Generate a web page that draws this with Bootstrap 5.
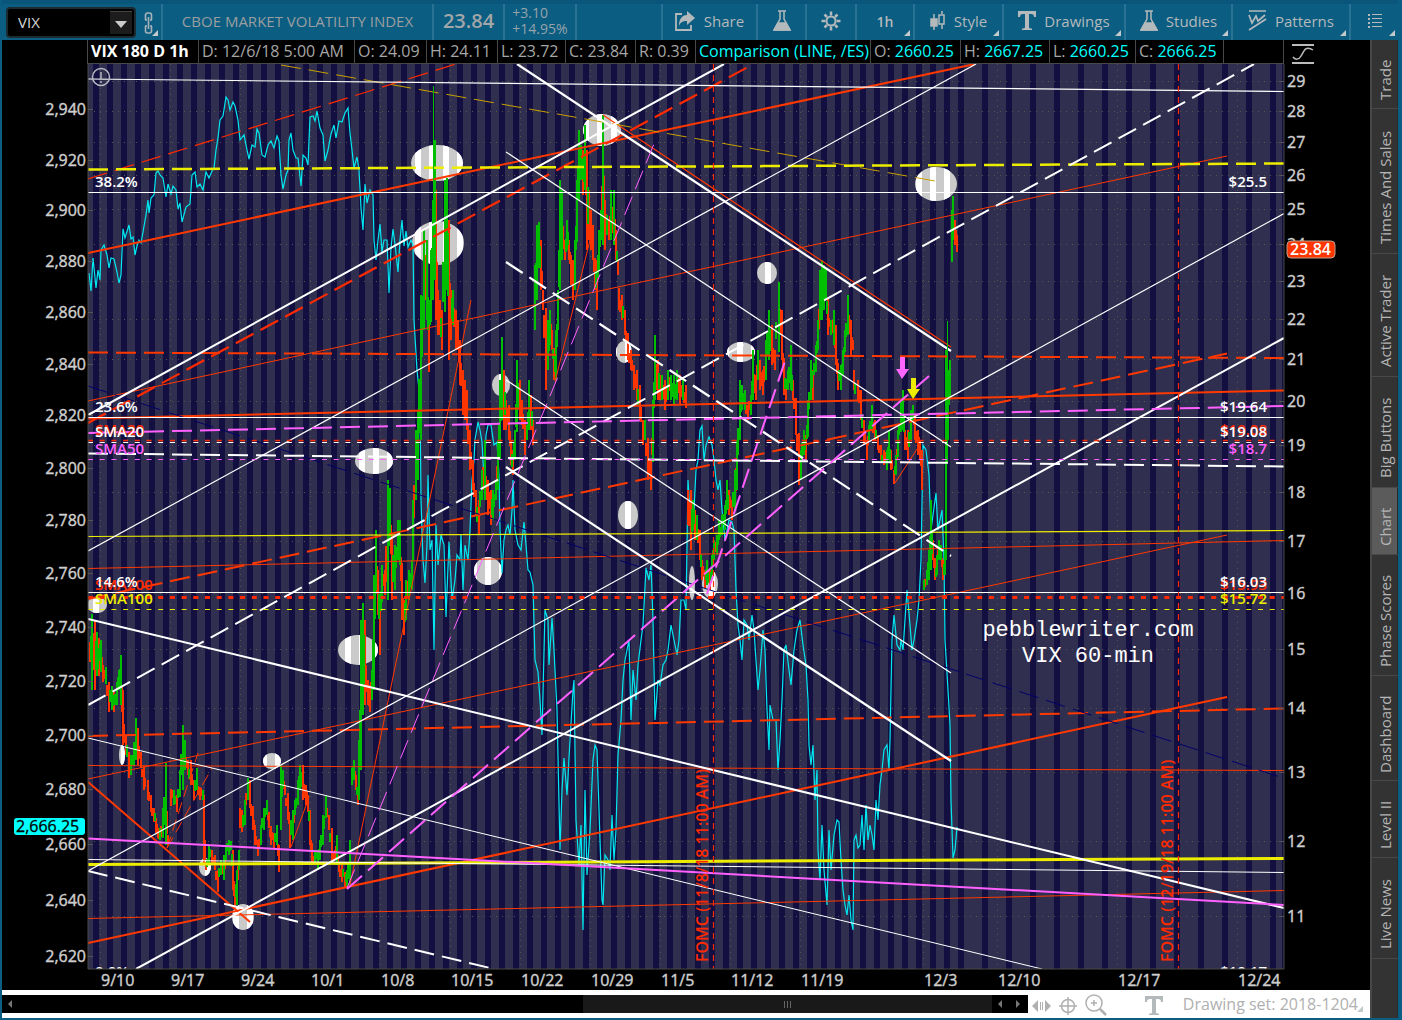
<!DOCTYPE html>
<html lang="en">
<head>
<meta charset="utf-8">
<meta name="viewport" content="width=device-width, initial-scale=1">
<title>VIX chart</title>
<link href="https://cdn.jsdelivr.net/npm/bootstrap@5.3.0/dist/css/bootstrap.min.css" rel="stylesheet">
<style>
:root{--teal:#0b5d82;--edge:#2a7294;--ink:#b4b9bb}
body{background:var(--teal);font-family:"Open Sans","Noto Sans",sans-serif;font-size:15px;color:var(--ink);overflow:hidden}
button{font:inherit;color:inherit;background:none;border:0;padding:0}
.app{padding:0 4px 2px 2px}
.topbar{height:40px;border-top:4px solid #0a567a;flex:none}
.cell{border-left:2px solid var(--edge);position:relative;display:flex;align-items:center;justify-content:center;gap:8px;height:36px;padding-bottom:2px;white-space:nowrap;flex:none}
.corner::after{content:"";position:absolute;right:3px;bottom:4px;border-left:6px solid transparent;border-bottom:6px solid #c4c9cb}
.symbox{width:130px;height:31px;margin-left:4px;background:#000;border:2px solid #1c2a31;border-radius:4px;padding:2px}
.symbox input{background:#000;border:0;color:#d8d8d8;width:100px;padding:0 0 0 8px;outline:0;font-size:15px}
.symbox button{width:24px;background:#1c1c1c;border-top:1px solid #444}
.w-link{width:25px;position:relative}
.w-name{width:271px;color:#9b9ea0}
.w-last{width:71px;color:#a3a6a8;font-size:20px;font-weight:600}
.w-chg{width:72px;color:#96a3a9;font-size:14px;line-height:16px}
.w-share{width:95px}.w-s{width:49px}.w-b{width:50px}.w-1h{width:58px;font-weight:600;font-size:14px}.w-style{width:89px}.w-draw{width:122px}.w-stud{width:107px}.w-pat{width:118px}.w-menu{width:49px}
.infobar{height:24px;padding-left:85px;background:#000;color:#a6a6a6;white-space:nowrap;font-size:16px}
.infobar span{border-left:1px solid #484848;padding-left:3px;line-height:23px;border-bottom:1px solid #484848;height:24px;flex:none}
.infobar b{font-weight:400;color:#0ff}
.board{background:#000;min-width:0}
.chartbox{min-height:0}
.chartbox svg{display:block;width:100%;height:100%}
.w1{width:111px}
.tabs-col{width:28px;background:#484848;padding-left:2px;gap:1px;flex:none}
.tabs-col button{background:#333;color:#b5b5b5;writing-mode:vertical-rl;transform:rotate(180deg);line-height:26px;font-size:15px;padding-bottom:12px;border-left:1px solid #2a2a2a}
.tabs-col button.active{background:#5b5b5b}
.footer-row{height:28px;background:#fff;color:#b0b0b0;flex:none}
.track{width:1026px;height:18px;background:#000;flex:0 1 auto}
.thumb{flex:0 1 409px;background:#191919}
.tri{width:22px;color:#666;display:flex;align-items:center;justify-content:center;flex:none}
.axis text{font-size:16px;fill:#cfcfcf;stroke:#cfcfcf;stroke-width:.4px}
.lab{font-size:15px;font-weight:600}
.memo{font:22px "Liberation Mono",monospace;fill:#fff}
</style>
<script src="https://cdn.jsdelivr.net/npm/bootstrap@5.3.0/dist/js/bootstrap.bundle.min.js"></script>
</head>
<body>
<div class="app d-flex flex-column vh-100">
  <header class="topbar d-flex align-items-center">
    <div class="symbox d-flex"><input aria-label="Symbol" value="VIX"><button aria-label="Symbol list"><svg width="12" height="7"><path d="M0 0h12l-6 7z" fill="#ccc"/></svg></button></div>
    <button class="w-link corner h-100" aria-label="Link"><svg width="9" height="22" fill="none" stroke="#a7b3b8" stroke-width="1.600"><path d="M1.500 8V3a2 2 0 0 1 2-2h2a2 2 0 0 1 2 2v5M1.500 14v5a2 2 0 0 0 2 2h2a2 2 0 0 0 2-2v-5M4.500 5v12M1 8h2M6 8h2M1 14h2M6 14h2"/></svg></button>
    <div class="cell w-name">CBOE MARKET VOLATILITY INDEX</div>
    <div class="cell w-last">23.84</div>
    <div class="cell w-chg"><div>+3.10<br>+14.95%</div></div>
    <div class="cell flex-grow-1"></div>
    <button class="cell w-share"><svg width="21" height="22" fill="none" stroke="#b4b9bb" stroke-width="1.800"><path d="M7 4H1v16h15v-5"/><path d="M12 1l8 7-8 7v-4C7 11 5 13 4 16 4 9 7 5 12 5z" fill="#b4b9bb" stroke="none"/></svg>Share</button>
    <button class="cell w-s" aria-label="Analyze"><svg width="18" height="22"><use href="#flask"/></svg></button>
    <button class="cell w-b" aria-label="Settings"><svg width="20" height="20" viewBox="-10 -10 20 20" fill="none" stroke="#b4b9bb"><circle r="4.500" stroke-width="2"/><path stroke-width="2.500" d="M0-5.500V-9.500M0 5.500V9.500M-5.500 0H-9.500M5.500 0H9.500M-4-4l-2.500-2.500M4 4l2.500 2.500M4-4l2.500-2.500M-4 4l-2.500 2.500"/></svg></button>
    <button class="cell corner w-1h">1h</button>
    <button class="cell corner w-style"><svg width="16" height="20" stroke="#b4b9bb" stroke-width="1.500"><path d="M4 3v16M12 0v3M12 13v5"/><path d="M1 8h6v7H1z" fill="#b4b9bb"/><path d="M9 4h5v9H9z" fill="none"/></svg>Style</button>
    <button class="cell corner w-draw"><svg width="18" height="20"><use href="#tee"/></svg>Drawings</button>
    <button class="cell corner w-stud"><svg width="18" height="22"><use href="#flask"/></svg>Studies</button>
    <button class="cell corner w-pat"><svg width="19" height="22" fill="none" stroke="#b4b9bb" stroke-width="1.700"><path d="M1 1h17M1 5l3 8 4-7 2 5 7-6M1 20L18 9"/></svg>Patterns</button>
    <button class="cell corner w-menu" aria-label="Menu"><svg width="14" height="14" fill="#b4b9bb"><path d="M0 0h2v2H0zM4 0h10v1H4zM0 4h2v2H0zM4 4h10v1H4zM0 8h2v2H0zM4 8h10v1H4zM0 12h2v2H0zM4 12h10v1H4z"/></svg></button>
  </header>

  <div class="d-flex flex-grow-1" style="min-height:0">
    <main class="board d-flex flex-column flex-grow-1">
      <div class="infobar d-flex">
        <span class="text-white fw-bold w1">VIX 180 D 1h</span><span style="width:156px">D: 12/6/18 5:00 AM</span><span style="width:72px">O: 24.09</span><span style="width:71px">H: 24.11</span><span style="width:68px">L: 23.72</span><span style="width:70px">C: 23.84</span><span style="width:60px">R: 0.39</span><span style="width:175px"><b>Comparison (LINE, /ES)</b></span><span style="width:90px">O: <b>2660.25</b></span><span style="width:89px">H: <b>2667.25</b></span><span style="width:86px">L: <b>2660.25</b></span><span style="width:88px">C: <b>2666.25</b></span><span class="flex-shrink-1" style="width:61px;border-right:1px solid #484848"></span>
        <svg class="ms-2 mt-1" width="22" height="20" fill="none" stroke="#bbb"><path stroke-width="2" d="M0 1h22M0 19h22"/><path stroke-width="1.500" d="M1 13c2 3 6 3 8-1l3-5c2-4 6-3 9-1"/></svg>
      </div>
      <div class="chartbox flex-grow-1">
        <svg id="chart" viewBox="2 64 1368 926" role="img" aria-label="VIX hourly chart with /ES comparison">
          <defs>
            <g id="flask" fill="none" stroke="#b4b9bb" stroke-width="1.500"><path d="M5 1h8M7 1v8L1 20h16L11 9V1"/><path d="M5 13h8l4 7H1z" fill="#b4b9bb"/></g>
            <path id="tee" d="M0 0h18v6h-2c0-2-1-3-3-3h-2v13c0 1 1 1.500 3 1.500V19H4v-1.500c2 0 3-.500 3-1.500V3H5C3 3 2 4 2 6H0z" fill="#b4b9bb"/>
            <clipPath id="plot"><rect x="88" y="64" width="1196" height="905"/></clipPath>
            <clipPath id="spots"></clipPath>
          </defs>
          <rect x="2" y="64" width="1368" height="926" fill="#000"/>
          <g clip-path="url(#plot)">
            <rect x="88" y="64" width="1196" height="905" fill="#312f4f"/>
            <path id="days" fill="#130f40"/>
            <g id="grid" stroke="#54544a" stroke-dasharray="1 5"></g>
            <g clip-path="url(#spots)"><rect x="88" y="64" width="1196" height="905" fill="#cacaca"/><path id="days2" fill="#fff"/></g>
            <polyline id="es" fill="none" stroke="#00e8f0" stroke-width="1.200"/>
            <path id="down" stroke="#ff3500" stroke-width="2"/>
            <path id="up" stroke="#00be00" stroke-width="2"/>
            <g id="studies"></g>
            <path d="M900 357h5v12h4l-7 10-6-10h4z" fill="#ff66ff"/>
            <path d="M911 378h5v11h4l-7 10-6-10h4z" fill="#eded00"/>
            <g class="lab" id="labels"></g>
            <g class="memo" text-anchor="middle"><text x="1088" y="636">pebblewriter.com</text><text x="1088" y="662">VIX 60-min</text></g>
            <g fill="#ff2a00" font-size="16" font-weight="600"><text transform="translate(708 962) rotate(-90)">FOMC (11/8/18 11:00 AM)</text><text transform="translate(1173 962) rotate(-90)">FOMC (12/19/18 11:00 AM)</text></g>
            <circle cx="101" cy="77" r="8.500" fill="none" stroke="#b8b8c0" stroke-width="1.500"/><path d="M101 72v7M101 81v2" stroke="#b8b8c0" stroke-width="1.500"/>
          </g>
          <path d="M88 64V969H1284V64" fill="none" stroke="#484840"/>
          <g class="axis" id="axes"></g>
          <rect x="14" y="818" width="71" height="17" rx="3" fill="#0ff"/><text x="16" y="832" font-size="16" fill="#000" stroke="#000" stroke-width=".300">2,666.25</text>
          <rect x="1287" y="241" width="48" height="17" rx="4" fill="#ff3500" stroke="#b8a090"/><text x="1290" y="255" font-size="16" font-weight="600" fill="#fff">23.84</text>
        </svg>
      </div>
      <div class="footer-row d-flex align-items-center">
        <div class="track d-flex">
          <button class="tri me-auto" style="width:16px" aria-label="Scroll to start"><svg width="4" height="8"><path d="M4 0v8L0 4z" fill="#777"/></svg></button>
          <div class="thumb d-flex align-items-center justify-content-center"><svg width="7" height="7" stroke="#666"><path d="M.500 0v7M3.500 0v7M6.500 0v7"/></svg></div>
          <button class="tri" style="width:16px" aria-label="Scroll left"><svg width="4" height="8"><path d="M4 0v8L0 4z" fill="#777"/></svg></button>
          <button class="tri" style="width:20px" aria-label="Scroll right"><svg width="4" height="8"><path d="M0 0v8l4-4z" fill="#777"/></svg></button>
        </div>
        <button class="ms-1" aria-label="Expand"><svg width="19" height="14" fill="#b0b0b0"><path d="M6 1v12L0 7zM13 1v12l6-6zM8 3h1v8H8zM10 3h1v8h-1z"/></svg></button>
        <button class="ms-2" aria-label="Crosshair"><svg width="18" height="18" fill="none" stroke="#b0b0b0" stroke-width="1.500"><circle cx="9" cy="9" r="6.500"/><path d="M9 0v18M0 9h18"/></svg></button>
        <button class="ms-2" aria-label="Zoom in"><svg width="22" height="22" fill="none" stroke="#b0b0b0" stroke-width="1.500"><circle cx="9" cy="9" r="8"/><path d="M9 6v6M6 9h6"/><path d="M15 15l6 6" stroke-width="2.500"/></svg></button>
        <button class="ms-auto me-3 pe-1" aria-label="Text"><svg width="18" height="19"><use href="#tee"/></svg></button>
        <span class="corner position-relative text-nowrap pe-2 me-1" style="font-size:16px">Drawing set: 2018-1204</span>
      </div>
    </main>
    <nav class="tabs-col d-flex flex-column" aria-label="Gadgets">
      <button style="height:68px">Trade</button><button style="height:144px">Times And Sales</button><button style="height:122px">Active Trader</button><button style="height:110px">Big Buttons</button><button class="active" style="height:66px">Chart</button><button style="height:120px">Phase Scores</button><button style="height:104px">Dashboard</button><button style="height:76px">Level II</button><button style="height:100px">Live News</button><button class="flex-grow-1" aria-label="More"></button>
    </nav>
  </div>
</div>
<script>
const $ = id => document.getElementById(id), NS = 'http://www.w3.org/2000/svg';
function add(parent, tag, attrs, text) {
  const e = document.createElementNS(NS, tag);
  for (const k in attrs) e.setAttribute(k, attrs[k]);
  if (text) e.textContent = text;
  $(parent).appendChild(e);
}
// overnight session bands
let bands = '';
for (let x = 93; x < 850; x += 14) bands += `M${x} 64h${x > 845 ? 4 : 6}v905h-${x > 845 ? 4 : 6}z`;
for (let x = 860; x < 950; x += 14) bands += `M${x} 64h6v905h-6z`;
for (let x = 958; x < 1284; x += 24) bands += `M${x} 64h6v905h-6z`;
bands += 'M1282 64h2v905h-2z';
$('days').setAttribute('d', bands); $('days2').setAttribute('d', bands);

const vix = [[29,81],[28,111],[27,142],[26,175],[25,209],[24,244],[23,281],[22,319],[21,359],[20,401],[19,445],[18,492],[17,541],[16,593],[15,649],[14,708],[13,772],[12,841],[11,916]];
for (const [v, y] of vix) {
  add('grid','line',{x1:88,x2:1284,y1:y+.5,y2:y+.5});
  add('axes','line',{x1:1279,x2:1284,y1:y+.5,y2:y+.5,stroke:'#555'});
  add('axes','text',{x:1287,y:y+6}, ''+v);
}
[109,160,210,261,312,364,415,468,520,573,627,681,735,789,844,900,956].forEach((y, i) => {
  add('axes','line',{x1:88,x2:93,y1:y+.5,y2:y+.5,stroke:'#555'});
  add('axes','text',{x:86,y:y+6,'text-anchor':'end'}, '2,' + (940 - 20*i));
});
[['9/10',100],['9/17',170],['9/24',240],['10/1',310],['10/8',380],['10/15',450],['10/22',520],['10/29',590],['11/5',660],['11/12',730],['11/19',800],['12/3',923],['12/10',997],['12/17',1117],['12/24',1237]].forEach(([d, x]) => {
  add('grid','line',{x1:x+.5,x2:x+.5,y1:64,y2:969});
  add('axes','text',{x:x+1,y:986}, d);
});

// marked areas
[[437,163,26,18],[438,243,26,22],[602,130,19,16],[936,184,21,17],[767,273,10,11],[741,352,14,10],[624,352,8,11],[501,385,9,11],[374,461,19,13],[488,571,14,14],[628,515,10,14],[358,650,20,15],[97,605,10,8],[122,755,3,10],[272,761,9,8],[205,867,6,9],[243,917,11,13],[692,583,3,17],[710,584,8,14]]
.forEach(([cx,cy,rx,ry]) => add('spots','ellipse',{cx,cy,rx,ry}));

// /ES comparison line
$('es').setAttribute('points', `89,273 91,291 93,258 96,288 98,270 100,280 101,250 104,245 107,255 109,268 111,258 114,259 117,272 119,283 121,275 123,229 125,238 129,225 131,239 133,237 135,255 137,246 139,240 141,243 143,232 146,215 148,200 149,213 151,198 154,195 156,173 158,171 160,175 163,178 166,197 168,184 171,194 173,186 176,190 178,209 180,203 182,222 186,207 190,204 192,175 195,172 197,187 200,184 203,190 206,172 209,178 212,171 214,168 216,150 218,138 220,120 223,116 226,97 228,100 230,110 233,102 235,106 238,120 240,140 244,135 247,150 249,159 252,145 255,147 257,129 259,133 262,155 265,157 268,145 271,141 274,148 277,136 279,141 281,175 283,189 286,175 288,170 289,140 291,133 293,150 296,158 298,158 301,186 303,155 306,158 308,165 310,117 313,116 315,121 317,111 320,128 323,135 325,161 328,150 331,134 334,125 336,138 339,121 342,122 345,113 348,108 350,133 352,150 354,168 357,157 359,170 361,208 363,230 365,184 367,203 370,190 373,195 374,240 376,260 378,240 380,224 382,252 384,240 387,240 389,293 391,248 393,229 395,244 398,272 400,240 402,220 404,246 406,231 408,247 411,240 413,245 414,320 417,370 420,400 421,500 423,560 425,583 427,545 428,475 430,550 432,540 434,650 436,525 438,565 441,535 444,545 446,617 449,542 452,600 455,580 457,555 460,560 461,535 463,590 465,545 468,560 470,530 472,480 474,460 475,440 478,422 480,430 482,442 484,480 486,435 488,425 491,425 494,445 497,442 499,475 500,530 502,573 504,540 506,530 508,525 510,535 512,510 513,480 515,530 518,545 521,550 524,522 526,545 528,570 530,572 533,585 535,660 538,672 540,700 542,735 545,610 548,620 549,665 552,618 554,650 557,710 560,850 562,790 564,758 567,795 570,740 573,690 574,680 576,820 579,865 581,825 583,930 585,790 587,875 590,830 593,760 595,745 597,750 599,810 602,900 603,905 605,855 608,860 610,870 612,815 614,860 616,830 618,755 621,720 623,680 625,660 627,650 629,640 631,720 633,670 636,700 638,665 641,640 643,625 646,568 649,580 651,565 653,620 655,720 658,680 660,685 663,665 666,660 668,650 671,625 674,640 677,655 679,640 681,600 684,600 686,610 688,480 691,530 693,530 696,470 698,460 700,430 702,426 704,460 706,445 709,437 712,445 714,460 716,480 718,490 720,480 722,510 725,540 727,530 729,520 732,522 734,530 736,590 738,625 740,640 742,660 744,620 747,625 749,640 752,615 754,630 756,660 758,690 760,670 763,630 765,650 767,710 769,750 770,705 773,720 776,720 778,770 780,740 782,700 784,650 786,645 789,670 791,685 794,650 797,630 800,620 803,645 806,665 808,700 809,745 811,765 813,745 815,800 817,770 818,850 820,880 822,825 824,870 827,905 829,830 831,870 834,835 837,820 839,822 841,860 843,890 845,905 847,915 849,895 851,920 853,930 854,840 856,835 858,848 860,845 862,815 864,850 866,805 868,840 870,825 872,835 874,850 876,800 878,820 880,785 882,770 884,750 887,745 889,770 890,740 892,640 894,615 897,645 900,650 901,640 903,650 905,620 907,590 910,625 912,650 914,640 917,620 919,600 921,560 923,445 926,450 929,475 931,530 933,515 936,493 938,530 940,520 942,510 944,560 945,640 948,690 950,725 951,800 953,858 955,850 957,827`);

// hourly bars: x, high, low
const bars = `90 642 662;92 614 690;95 620 690;97 632 676;99 638 676;101 640 672;103 665 682;106 667 684;109 687 712;112 686 710;114 692 712;117 682 705;119 670 690;121 655 705;123 690 745;126 735 755;129 752 778;131 755 775;134 742 765;136 718 760;138 728 765;141 752 768;144 775 790;148 780 800;151 795 812;154 808 822;156 818 833;158 828 838;160 828 840;163 808 838;166 763 845;168 835 845|171 789 806;174 790 805;177 795 812;180 770 790;183 725 790;185 740 770;188 760 775;191 760 785;194 780 800;197 768 790;200 787 800;203 790 800;204 795 865;206 862 870;209 845 860;212 850 865;215 855 870;218 870 892;221 860 875;224 855 880;226 845 860;229 840 855;231 841 850;233 850 890;235 890 908;237 870 905;239 850 870|240 808 828;242 810 832;245 800 825;248 778 800;250 780 808;253 810 830;255 825 845;258 840 856;261 825 845;264 808 830;267 800 815;269 812 828;271 830 845;274 833 848;277 825 845;279 845 872|281 765 830;283 770 788;285 785 795;288 800 820;290 820 848;293 810 840;295 800 815;298 780 805;300 765 790;303 765 800;306 785 805;308 795 812;310 820 845;312 850 865;315 850 865;318 850 870;320 840 860;323 815 845;326 795 818;329 815 830;332 840 862;335 850 860;337 835 865;339 865 872;342 865 882;345 872 888;347 870 886;350 840 885|352 768 785;354 760 780;356 775 790;358 790 805;359 740 800;361 620 770;363 603 715;365 620 705;368 680 705;370 685 712;372 670 700;374 575 690;376 530 590;378 570 615;380 600 655;382 565 590;385 570 595;388 480 600;390 488 540;392 535 600;395 545 590;398 520 560;400 520 565;402 570 620;404 600 635;406 580 620;409 570 600;412 560 590;413 500 560;416 430 500;418 410 480;421 295 440;424 230 330;427 240 320;429 320 372;431 250 300;433 200 300;435 140 280;436 190 320;438 290 335;440 300 335;442 310 350;445 180 300;447 178 290;449 220 360;451 290 340;453 290 325;456 310 350;458 320 350;460 340 385;463 370 415;465 380 420;467 390 430;470 430 470;473 460 490;476 490 515;479 500 535;482 470 500;485 440 500;488 480 515;491 490 525;493 490 520;496 480 500;498 440 490;500 380 460;502 337 420;504 370 430;506 400 430;509 405 440;511 440 465;513 450 475;515 430 460;517 360 420;520 380 420;522 400 425;525 420 455;527 425 440;529 380 430;531 395 430;533 420 445|535 265 330;537 225 300;539 222 260;541 240 290;543 290 310;546 320 390;548 320 370;550 310 345;552 330 350;554 360 380;556 330 380;558 290 330;560 180 290;562 190 260;565 240 260;567 220 250;569 240 260;571 255 285;573 260 300;575 240 290;577 180 225;579 130 200;581 145 180;583 150 195;585 125 190;587 150 250;589 190 240;591 210 250;593 225 260;595 270 290;597 260 310;599 230 270;601 210 240;603 115 245;605 200 250;607 215 235;609 220 240;611 190 240;614 190 245;616 230 260;618 260 275|619 288 310;622 295 320;625 310 335;628 340 360;631 350 370;634 365 390;637 370 400;640 385 420;643 420 445;645 420 440;648 450 480;651 460 490;653 400 440;655 335 400;658 360 400;660 375 400;662 375 400;665 380 410;668 370 400;671 375 400;674 375 405;677 370 400;680 375 405;683 380 400;686 385 408|688 490 525;691 490 550;693 500 530;695 510 540;697 515 540;700 530 560;702 560 580;705 570 588;707 560 585;710 570 590;712 555 575;714 540 560;717 535 555;719 520 540;722 515 535;725 505 530;727 480 510;729 490 515;732 500 520;735 470 510;737 440 490;740 380 440;742 385 410;745 390 410;748 405 420;751 395 415;753 350 400;756 375 400;758 350 380;760 360 390;763 370 395;766 340 380;769 310 360;772 325 365;775 350 370;779 282 330;782 310 360;784 370 395;786 380 400;788 370 390;791 345 390;793 380 400;796 410 435;799 440 485;801 450 480;804 430 455;806 435 460;808 400 430;811 360 400;813 370 400;816 345 365;818 320 350;820 270 320;822 260 320;824 265 310;826 268 300;828 315 335;831 320 335;834 310 345;836 325 365;838 370 390;841 365 390;843 350 375;845 330 345;848 295 335;851 320 355;853 340 350|854 370 390;858 380 400;861 390 420;864 420 445;867 440 460;869 425 440;872 405 430;875 420 440;878 435 450;881 445 460;884 450 465;887 450 470;889 430 460;891 450 470;894 470 484;896 455 475;898 430 450;901 400 425;903 390 430;905 430 450;908 430 460;911 410 440;913 405 420;915 415 440;918 430 455;920 440 460;922 450 490|924 580 590;927 570 585;929 550 580;931 500 570;933 540 560;935 565 580;937 555 575;939 540 560;941 545 560;943 560 580;945 550 575;946 350 560;948 370 440;950 360 400|952 210 262;953 196 240;955 220 245;957 235 252`;
let up = '', down = '';
for (const run of bars.split('|')) {
  const b = run.split(';').map(s => s.split(' ').map(Number));
  b.forEach(([x, hi, lo], i) => {
    const p = b[i-1] || b[i+1], mid = (hi + lo) / 2, pm = (p[1] + p[2]) / 2;
    const rising = i ? mid < pm + 3 : mid > pm;
    // stretch each bar so that it reaches the one before it
    let t = hi, l = lo;
    if (i) { if (t > p[2]) t = p[2] - 2; if (l < p[1]) l = p[1] + 2; }
    const seg = `M${x} ${t}V${l}`;
    if (rising) up += seg; else down += seg;
    const n = b[i+1];
    if (n && n[0] - x > 1) {
      // half-step bar, about half as tall as its neighbours
      const c = (hi + lo + n[1] + n[2]) / 4 + (x * 37 % 9) - 4, r = Math.max(4, (lo - hi + n[2] - n[1]) / 8);
      const next = (n[1] + n[2]) / 2 < mid;
      const s2 = `M${x + 1} ${Math.round(c - r)}V${Math.round(c + r)}`;
      if (x * 13 % 7 < 2 ? !next : next) up += s2; else down += s2;
    }
  });
}
$('up').setAttribute('d', up); $('down').setAttribute('d', down);

const W='#ffffff', O='#ff3800', R='#ff2a00', Y='#eded00', M='#ff60ff', L='20 8', T='20 8', F='5 6.7';
[
 [O,2,'',88,418.500,1284,390.500],[O,1,'',88,401,1227,156],[O,1,'',88,568.500,1284,540.500],[O,1,'',88,779,1227,535],[O,1,'',88,765.500,1284,770.500],[O,1,'',88,918.500,1284,890.500],
 [O,2,'',88,253,975,64],[O,2,'',88,943,1227,697],[O,2,'',88,782,250,922],[R,2.200,L,88,423,748,67],[R,1.200,T,88,179,456,64],
 [O,2,L,88,352.500,1284,358],[O,2,L,88,599,1227,353.500],[O,2,L,88,736,1284,708.500],[O,1.200,'',603,115,951,347],
 [O,1,'',350,885,471,300],[O,1,'',555,382,592,232],[O,1,'12 6',167,848,198,753],[O,1,'12 6',167,848,212,768],[O,1,'',291,847,309,797],[O,1,'',895,483,919,446],
 ['#c8a000',1,T,281,65,935,181],['#00006a',1,T,88,386,1280,777],
 [Y,2.500,L,88,169.500,1284,163.500],[Y,1.200,'',88,536.500,1284,530.500],[Y,3,'',88,864.500,1284,858.500],
 [W,1.200,'',88,79,1284,91.500],[W,1,'',88,192.500,1284,192.500],[W,1,'',88,417.500,1284,417.500],[W,1,'',88,592.500,1284,592.500],
 [W,2,'',88,415,724,64],[W,1.200,'',88,551,976,64],[W,2,'',136,969,1284,338],[W,1.200,'',88,871,1284,213.500],[W,2,L,88,705,1254,64],
 [W,2.200,'',517,64,951,351],[W,1.200,'',506,152,951,447],[W,2.200,L,506,262,951,556],[W,1.200,'',506,380,951,673],[W,2.200,'',506,467,951,761],
 [W,2,'',88,619,1284,908],[W,1,'',88,738,1042,969],[W,2,L,88,871,490,968],[W,2,L,88,453.500,1284,466.500],[W,1,'',88,859.500,1284,872.500],
 [M,2,L,88,433,1284,406],[M,2,'',88,838.500,1284,905],[M,1,T,347,888,656,139],[M,2,L,347,889,929,376],[M,2,L,707,594,786,358],
 [R,1.500,F,88,440.500,1284,440.500],[W,1,F,88,442.500,1284,442.500],[M,1,F,88,459.500,1284,459.500],[R,3,F,88,597.500,1284,597.500],[Y,1,F,88,609.500,1284,609.500],
 [R,1.200,'6 5',713.500,64,713.500,969],[R,1.200,'6 5',1178.500,64,1178.500,969],['#00be00',1,'',433.500,86,433.500,210],['#00be00',1,'',947.500,321,947.500,380]
].forEach(([stroke,w,dash,x1,y1,x2,y2]) => add('studies','line',{stroke,'stroke-width':w,'stroke-dasharray':dash||'none',x1,y1,x2,y2}));

[['SMA200',95,590,R],['38.2%',95,187,W],['23.6%',95,412,W],['SMA20',95,435,R],['SMA20',95,437,W],['SMA50',95,454,M],['14.6%',95,587,W],['SMA100',95,604,Y],['0.0%',95,977,W]]
 .forEach(([t,x,y,fill]) => add('labels','text',{x,y,fill}, t));
[['$25.5',187,W],['$19.64',412,W],['$19.08',435,R],['$19.08',437,W],['$18.7',454,M],['$15.93',590,R],['$16.03',587,W],['$15.72',604,Y],['$10.17',977,W]]
 .forEach(([t,y,fill]) => add('labels','text',{x:1267,y,fill,'text-anchor':'end'}, t));
</script>
</body>
</html>
